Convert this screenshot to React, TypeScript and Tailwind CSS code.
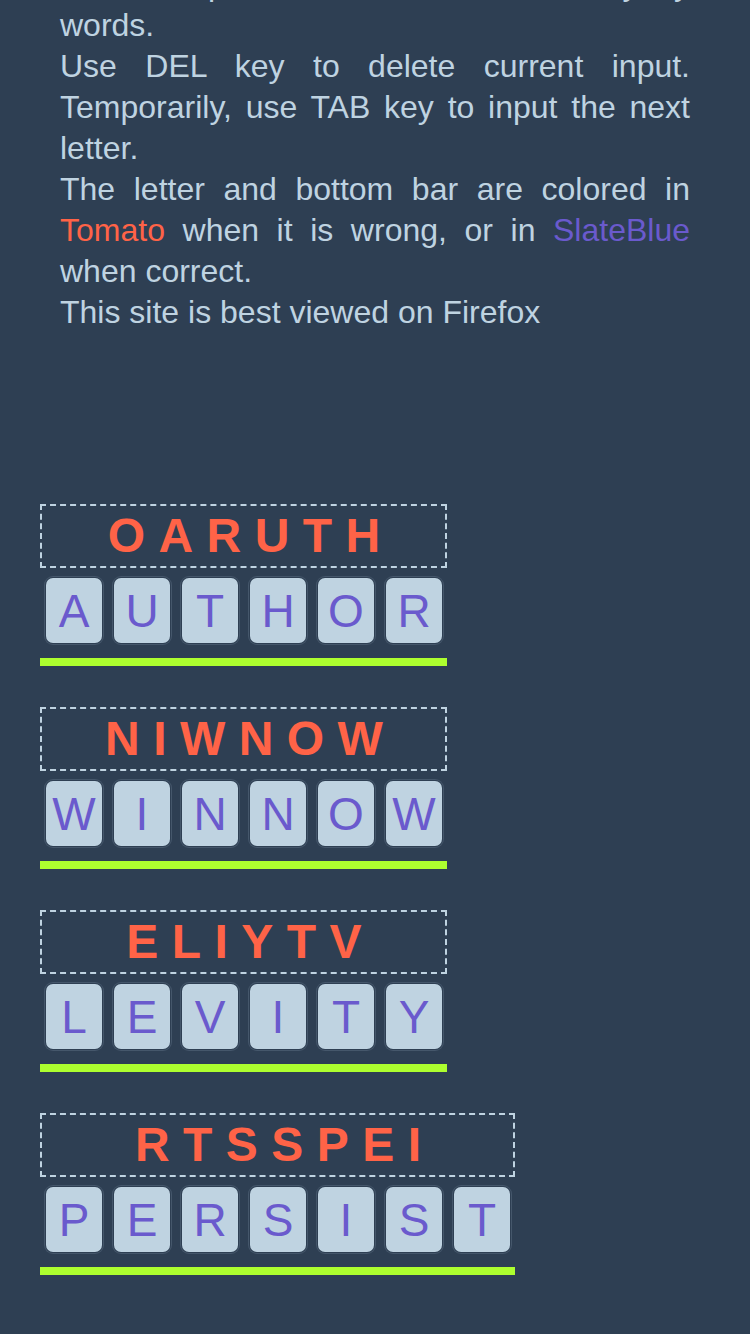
import React from "react";

const puzzles = [
  { scrambled: "OARUTH", answer: "AUTHOR" },
  { scrambled: "NIWNOW", answer: "WINNOW" },
  { scrambled: "ELIYTV", answer: "LEVITY" },
  { scrambled: "RTSSPEI", answer: "PERSIST" },
];

const Puzzle = ({ scrambled, answer }: { scrambled: string; answer: string }) => {
  return (
    <div className="flex w-fit flex-col">
      <div className="flex h-[64px] items-center justify-center border-2 border-dashed border-[#bfd3e1]">
        <span className="pl-[0.3em] text-[48px] font-bold leading-none tracking-[0.28em] text-[#ff6347]">
          {scrambled}
        </span>
      </div>

      <div className="mt-[10px] flex gap-[12px] pl-[6px] pr-[5px]">
        {answer.split("").map((ch, i) => (
          <div
            key={i}
            className="flex h-[65px] w-[56px] items-center justify-center rounded-[7px] bg-[#bfd3e1] text-[46px] leading-none text-[#6a5acd] ring-1 ring-[#45576b] ring-offset-1 ring-offset-[#2e3f53]"
          >
            {ch}
          </div>
        ))}
      </div>

      <div className="mt-[15px] h-[8px] bg-[#adff2f]" />
    </div>
  );
};

export default function App() {
  return (
    <div
      className="min-h-screen overflow-hidden bg-[#2e3f53] pb-[60px] text-[#bfd3e1]"
      style={{ fontFamily: '"Liberation Sans", Arial, sans-serif' }}
    >
      {/* page is scrolled: the line above "words." is mostly out of view */}
      <div className="-mt-[36px] px-[60px] text-[32px] leading-[41px]">
        <p className="text-justify">
          Solve the puzzles, all of them are everyday words.
        </p>
        <p className="text-justify">
          Use DEL key to delete current input. Temporarily, use TAB key to input the next letter.
        </p>
        <p className="text-justify">
          The letter and bottom bar are colored in <span className="text-[#ff6347]">Tomato</span> when it
          is wrong, or in <span className="text-[#6a5acd]">SlateBlue</span> when correct.
        </p>
        <p>This site is best viewed on Firefox</p>
      </div>

      <div className="mt-[171px] flex flex-col gap-[41px] pl-[40px]">
        {puzzles.map((p) => (
          <Puzzle key={p.answer} scrambled={p.scrambled} answer={p.answer} />
        ))}
      </div>
    </div>
  );
}
